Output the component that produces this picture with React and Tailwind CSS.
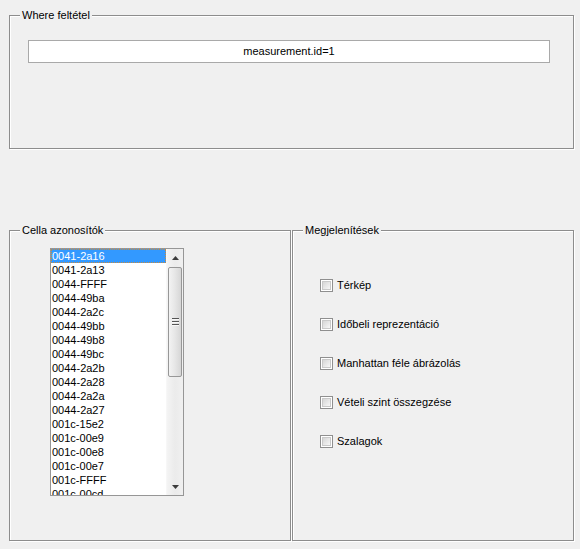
import React from "react";

const items = [
  "0041-2a16", "0041-2a13", "0044-FFFF", "0044-49ba", "0044-2a2c", "0044-49bb",
  "0044-49b8", "0044-49bc", "0044-2a2b", "0044-2a28", "0044-2a2a", "0044-2a27",
  "001c-15e2", "001c-00e9", "001c-00e8", "001c-00e7", "001c-FFFF", "001c-00cd",
];

const checks = [
  "Térkép",
  "Időbeli reprezentáció",
  "Manhattan féle ábrázolás",
  "Vételi szint összegzése",
  "Szalagok",
];

function Group({ title, className, children }) {
  return (
    <fieldset
      className={
        "border border-[#8d8d8d] shadow-[inset_1px_1px_0_#ffffff,1px_1px_0_#ffffff] min-w-0 " +
        className
      }
    >
      <legend className="ml-[10px] px-[2px] leading-[13px] bg-[#f0f0f0]">{title}</legend>
      {children}
    </fieldset>
  );
}

function CheckBox() {
  return (
    <span className="block w-[13px] h-[13px] border border-[#8f8f8f] bg-white p-px shrink-0">
      <span className="block w-full h-full border border-[#c9c9c9] bg-linear-to-br from-[#d6d6d6] to-[#f7f7f7]" />
    </span>
  );
}

function ScrollBar() {
  return (
    <div className="w-[17px] flex flex-col bg-linear-to-r from-[#f4f4f4] via-[#ebebeb] to-[#f0f0f0] border-l border-[#f7f7f7]">
      <div className="h-[17px] flex items-center justify-center">
        <svg width="7" height="4" viewBox="0 0 7 4">
          <polygon points="3.5,0 7,4 0,4" fill="#3c3c3c" />
        </svg>
      </div>
      <div className="mt-px mx-px h-[110px] rounded-[2px] border border-[#979797] bg-linear-to-r from-[#f3f3f3] via-[#e6e6e6] to-[#d6d6d6] flex flex-col items-center justify-center gap-[1px]">
        <span className="block w-[7px] h-[2px] border-t border-[#555] border-b border-b-[#f8f8f8]" />
        <span className="block w-[7px] h-[2px] border-t border-[#555] border-b border-b-[#f8f8f8]" />
        <span className="block w-[7px] h-[2px] border-t border-[#555] border-b border-b-[#f8f8f8]" />
      </div>
      <div className="flex-1" />
      <div className="h-[17px] flex items-center justify-center">
        <svg width="7" height="4" viewBox="0 0 7 4">
          <polygon points="0,0 7,0 3.5,4" fill="#3c3c3c" />
        </svg>
      </div>
    </div>
  );
}

export default function App() {
  return (
    <div className="w-[580px] h-[549px] bg-[#f0f0f0] pl-[9px] pt-[9px] overflow-hidden font-['Liberation_Sans',Arial,sans-serif] text-[11px] text-black">
      <Group title="Where feltétel" className="w-[565px] h-[140px]">
        <div className="mt-[18px] ml-[18px] w-[522px] h-[23px] border border-[#a9a9a9] bg-white text-center leading-[21px]">
          measurement.id=1
        </div>
      </Group>

      <div className="mt-[75px] grid grid-cols-[282px_282px] gap-x-px">
        <Group title="Cella azonosítók" className="h-[317px]">
          <div className="mt-[11px] ml-[40px] w-[134px] h-[248px] border border-[#969696] bg-white flex overflow-hidden">
            <div className="flex-1 overflow-hidden">
              {items.map((it, i) => (
                <div
                  key={it}
                  className={
                    i === 0
                      ? "h-[14px] leading-[13px] border border-dotted border-[#c98a3c] bg-[#3399ff] text-white"
                      : "h-[14px] leading-[13px] border border-transparent"
                  }
                >
                  {it}
                </div>
              ))}
            </div>
            <ScrollBar />
          </div>
        </Group>

        <Group title="Megjelenítések" className="h-[317px]">
          <div className="mt-[42px] ml-[27px] flex flex-col gap-[26px]">
            {checks.map((c) => (
              <div key={c} className="h-[13px] flex items-center gap-[4px] whitespace-nowrap">
                <CheckBox />
                <span className="leading-[13px]">{c}</span>
              </div>
            ))}
          </div>
        </Group>
      </div>
    </div>
  );
}
